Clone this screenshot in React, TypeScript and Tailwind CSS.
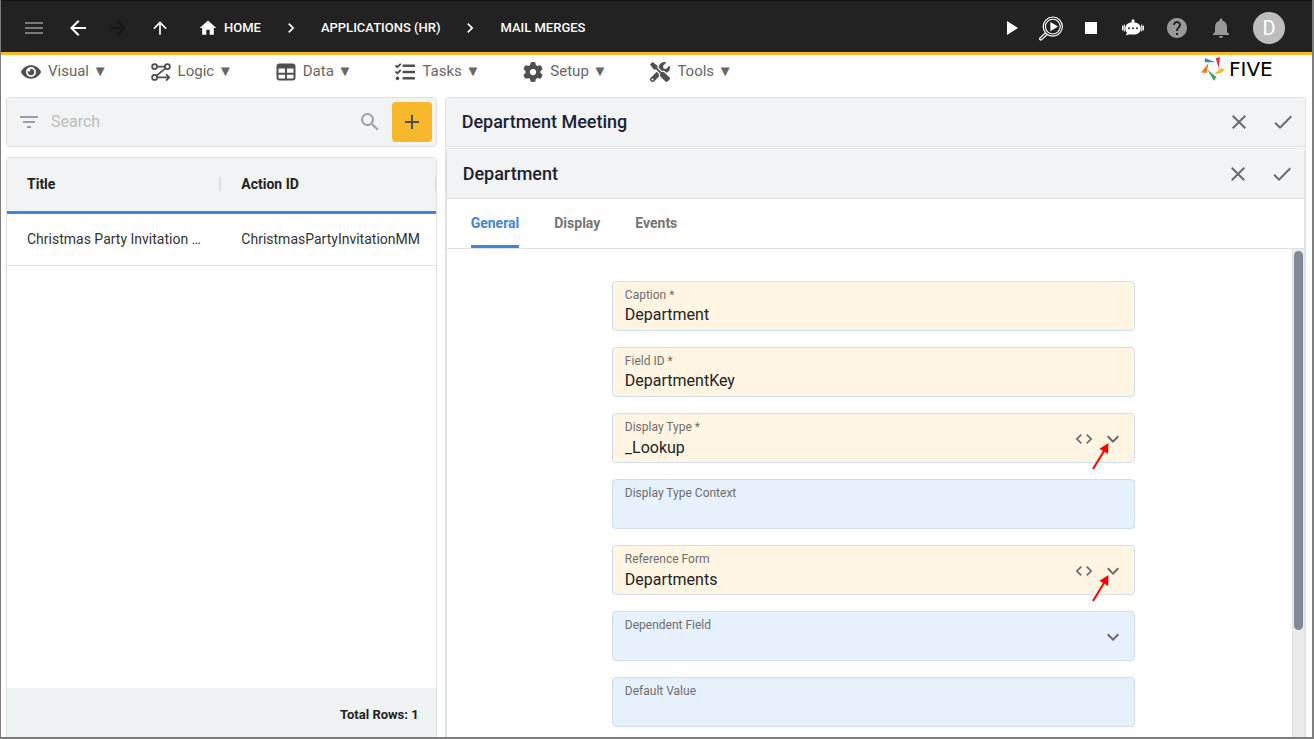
import { useState } from 'react'
import type { ReactNode } from 'react'
import {
  MdAdd,
  MdArrowBack,
  MdArrowForward,
  MdArrowUpward,
  MdCheck,
  MdChevronRight,
  MdClose,
  MdCode,
  MdExpandMore,
  MdFilterList,
  MdHelp,
  MdHome,
  MdMenu,
  MdNotifications,
  MdPlayArrow,
  MdSearch,
  MdStop,
} from 'react-icons/md'
import { FaEye, FaTasks, FaTools } from 'react-icons/fa'
import { FaGear } from 'react-icons/fa6'

interface FieldDef {
  id: string
  label: string
  value: string
  filled?: boolean
  kind?: 'select'
  code?: boolean
}

const FIELDS: FieldDef[] = [
  { id: 'caption', label: 'Caption *', value: 'Department', filled: true },
  { id: 'fieldId', label: 'Field ID *', value: 'DepartmentKey', filled: true },
  { id: 'displayType', label: 'Display Type *', value: '_Lookup', filled: true, kind: 'select', code: true },
  { id: 'displayContext', label: 'Display Type Context', value: '' },
  { id: 'referenceForm', label: 'Reference Form', value: 'Departments', filled: true, kind: 'select', code: true },
  { id: 'dependentField', label: 'Dependent Field', value: '', kind: 'select' },
  { id: 'defaultValue', label: 'Default Value', value: '' },
]

const MENUS: { label: string; icon: ReactNode }[] = [
  { label: 'Visual', icon: <FaEye size={20} /> },
  { label: 'Logic', icon: <LogicIcon /> },
  { label: 'Data', icon: <DataIcon /> },
  { label: 'Tasks', icon: <FaTasks size={20} /> },
  { label: 'Setup', icon: <FaGear size={20} /> },
  { label: 'Tools', icon: <FaTools size={20} /> },
]

const TABS = ['General', 'Display', 'Events']

function LogicIcon() {
  return (
    <svg width="20" height="20" viewBox="0 0 20 20" fill="none" stroke="currentColor" strokeWidth="1.8">
      <circle cx="3.6" cy="4.6" r="2.5" />
      <circle cx="16.4" cy="4.6" r="2.5" />
      <circle cx="3.6" cy="15.4" r="2.5" />
      <path d="M6.1 4.6h7.8M14.6 6.4l-9.1 7.2M6.1 15.4h11.7M15 12.2l3.2 3.2-3.2 3.2" />
    </svg>
  )
}

function DataIcon() {
  return (
    <svg width="20" height="20" viewBox="0 0 20 20" fill="none" stroke="currentColor" strokeWidth="2">
      <rect x="1.5" y="2.5" width="17" height="15" rx="2" />
      <path d="M2 4.5h16" strokeWidth="4" />
      <path d="M2 11.7h16M10 6v11" />
    </svg>
  )
}

function InspectIcon() {
  return (
    <svg width="26" height="26" viewBox="0 0 26 26" fill="none" stroke="currentColor">
      <circle cx="14.8" cy="11.6" r="9.6" strokeWidth="1.2" />
      <circle cx="14.8" cy="11.6" r="7.4" strokeWidth="1.1" />
      <path d="M7.6 17.6L2 23a1.1 1.1 0 0 0 1.6 1.6l5.8-5.2" strokeWidth="1.3" />
      <path d="M12.4 7v9.2l7.6-4.6z" fill="currentColor" stroke="none" />
    </svg>
  )
}

function BotIcon() {
  return (
    <svg width="22" height="18" viewBox="0 0 22 18" fill="currentColor">
      <circle cx="11" cy="1.8" r="1.5" />
      <path d="M10.3 2h1.4v2h-1.4z" />
      <path d="M11 3.2c4.8 0 7.8 2.6 7.8 6.2 0 3.7-3 6.2-7.8 6.2-1.2 0-2.2-.1-3.1-.4L4 16.6l.9-3c-1.1-1.1-1.7-2.5-1.7-4.2 0-3.6 3-6.2 7.8-6.2z" />
      <rect x="0" y="6.5" width="1.5" height="5" rx=".7" />
      <rect x="20.5" y="6.5" width="1.5" height="5" rx=".7" />
      <path d="M1.8 5.5h1v7h-1zM19.2 5.5h1v7h-1z" />
      <g fill="#222222">
        <circle cx="7" cy="9.2" r="1" />
        <circle cx="11" cy="9.2" r="1" />
        <circle cx="15" cy="9.2" r="1" />
      </g>
    </svg>
  )
}

function FiveMark() {
  return (
    <svg width="24" height="24" viewBox="0 0 24 24">
      <path d="M3.8 1l10.7 4.3H3.8z" fill="#3f83d8" />
      <path d="M14.7 1.3L19 0l-1.2 11.5z" fill="#e5323c" />
      <path d="M24 12.6l-4.5 3.6-7 1 8-6.2z" fill="#f9b82a" />
      <path d="M6.3 12.8l9.2 7.2-2.7 3.8z" fill="#3fa657" />
      <path d="M7.6 5.8L5.7 16 0 15.6z" fill="#f47b2a" />
    </svg>
  )
}

function TopBar() {
  return (
    <header className="flex h-[55px] shrink-0 items-center border-t border-b-3 border-t-[#111111] border-b-[#fbb829] bg-[#222222] pt-0.5 pr-[27px] pl-[9px] text-white">
      <button type="button" aria-label="Menu" className="flex w-12 justify-center text-[#7a7a7a]">
        <MdMenu size={24} />
      </button>
      <button type="button" aria-label="Back" className="flex w-10 justify-center">
        <MdArrowBack size={24} />
      </button>
      <button type="button" aria-label="Forward" disabled className="flex w-10 justify-center text-[#151515]">
        <MdArrowForward size={24} />
      </button>
      <button type="button" aria-label="Up" className="flex w-11 justify-center">
        <MdArrowUpward size={20} />
      </button>
      <nav aria-label="Breadcrumb" className="ml-4 flex items-center gap-5 text-[13px] font-medium">
        <a href="#home" className="flex items-center gap-1.5">
          <MdHome size={20} />
          HOME
        </a>
        <MdChevronRight size={20} />
        <a href="#applications">APPLICATIONS (HR)</a>
        <MdChevronRight size={20} />
        <a href="#mail-merges">MAIL MERGES</a>
      </nav>
      <div className="ml-auto flex items-center">
        <button type="button" aria-label="Run" className="flex w-10 justify-center">
          <MdPlayArrow size={24} />
        </button>
        <button type="button" aria-label="Inspect" className="flex w-10 justify-center">
          <InspectIcon />
        </button>
        <button type="button" aria-label="Stop" className="flex w-10 justify-center">
          <MdStop size={24} />
        </button>
        <button type="button" aria-label="Assistant" className="flex w-11 justify-center">
          <BotIcon />
        </button>
        <button type="button" aria-label="Help" className="flex w-11 justify-center text-[#999999]">
          <MdHelp size={24} />
        </button>
        <button type="button" aria-label="Notifications" className="flex w-11 justify-center text-[#999999]">
          <MdNotifications size={24} />
        </button>
        <button type="button" className="ml-2.5 size-8 rounded-full bg-[#bdbdbd] text-xl leading-8">
          D
        </button>
      </div>
    </header>
  )
}

function MenuBar() {
  return (
    <div className="flex h-8 shrink-0 items-center justify-between pr-[23px] pl-5">
      <nav className="flex items-center gap-[43px]">
        {MENUS.map((m) => (
          <button key={m.label} type="button" className="flex items-center gap-[7px] text-[15px] text-[#666666]">
            <span className="pt-px text-[#4f4f4f]">{m.icon}</span>
            <span>{m.label} ▼</span>
          </button>
        ))}
      </nav>
      <a href="#five" className="flex items-center gap-1 self-start pt-0.5">
        <FiveMark />
        <span className="w-[60px] font-['DejaVu_Sans',sans-serif] text-xl leading-6 text-black">FIVE</span>
      </a>
    </div>
  )
}

function RecordList() {
  return (
    <section className="flex min-h-0 flex-col gap-2.5">
      <div className="flex h-[50px] shrink-0 items-center rounded border border-[#dfe1e3] bg-[#f1f3f5] pr-1 pl-2.5">
        <button type="button" aria-label="Filter" className="text-[#98a1ab]">
          <MdFilterList size={24} />
        </button>
        <input
          type="search"
          aria-label="Search"
          placeholder="Search"
          className="ml-2.5 min-w-0 flex-1 bg-transparent text-base outline-none placeholder:text-[#bcbdbf]"
        />
        <button type="button" aria-label="Run search" className="mr-2.5 text-[#9aa1a8]">
          <MdSearch size={24} />
        </button>
        <button
          type="button"
          aria-label="Add"
          className="flex size-10 items-center justify-center rounded bg-[#f8b82b] text-[#4d4d4d]"
        >
          <MdAdd size={24} />
        </button>
      </div>

      <div className="flex min-h-0 flex-1 flex-col rounded-t border border-b-0 border-[#dfe1e3]">
        <table className="w-full table-fixed text-left text-sm text-[#333333]">
          <thead>
            <tr className="h-[54px] border-b-3 border-[#4285d8] bg-[#f1f3f5] text-[#222222]">
              <th className="p-0 font-bold">
                <div className="flex items-center justify-between pl-5">
                  Title
                  <span className="h-3.5 w-0.5 bg-[#dcdfe2]" />
                </div>
              </th>
              <th className="p-0 font-bold">
                <div className="flex items-center justify-between pl-5">
                  Action ID
                  <span className="h-3.5 w-px bg-[#dcdfe2]" />
                </div>
              </th>
            </tr>
          </thead>
          <tbody>
            <tr className="h-[53px] border-b border-[#e2e2e2]">
              <td className="pl-5">Christmas Party Invitation …</td>
              <td className="pl-5">ChristmasPartyInvitationMM</td>
            </tr>
          </tbody>
        </table>
        <div className="mt-auto flex h-[49px] items-center justify-end bg-[#eff3f4] pt-1 pr-[17px] text-[13px] font-bold text-[#222222]">
          Total Rows: 1
        </div>
      </div>
    </section>
  )
}

function PanelHeader({ title }: { title: string }) {
  return (
    <div className="flex h-[49px] shrink-0 items-center rounded-t border-b border-[#dfe1e3] bg-[#f1f3f5] pr-2.5 pl-4 text-[#6b6b6b]">
      <h2 className="mr-auto text-lg font-medium text-[#1b2233]">{title}</h2>
      <button type="button" aria-label={`Close ${title}`} className="mr-5">
        <MdClose size={24} />
      </button>
      <button type="button" aria-label={`Save ${title}`}>
        <MdCheck size={24} />
      </button>
    </div>
  )
}

function Pointer() {
  return (
    <svg
      className="pointer-events-none absolute top-7 right-6 z-10"
      width="18"
      height="28"
      viewBox="0 0 18 28"
    >
      <path d="M1 27 12 9" stroke="#ff0000" strokeWidth="2" />
      <path d="M16.5 1 16 12 7.5 6.8z" fill="#ff0000" />
    </svg>
  )
}

function Field({ field }: { field: FieldDef }) {
  const [value, setValue] = useState(field.value)

  return (
    <div
      className={`relative h-[50px] rounded border border-[#cdddec] px-3 pt-1 ${
        field.filled ? 'bg-[#fff5e2]' : 'bg-[#e7f1fc]'
      }`}
    >
      <label htmlFor={field.id} className="block text-xs leading-[18px] text-[#6e6e6e]">
        {field.label}
      </label>
      {field.kind === 'select' ? (
        <select
          id={field.id}
          value={value}
          onChange={(e) => setValue(e.target.value)}
          className="block h-6 w-full appearance-none bg-transparent text-base text-[#222222] outline-none"
        >
          <option value={field.value}>{field.value}</option>
        </select>
      ) : (
        <input
          id={field.id}
          value={value}
          onChange={(e) => setValue(e.target.value)}
          className="block h-[22px] w-full bg-transparent text-base text-[#222222] outline-none"
        />
      )}
      {field.kind === 'select' && (
        <div className="pointer-events-none absolute inset-y-0 right-[9px] flex items-center gap-[7px] pt-px text-[#6b6b6b]">
          {field.code && <MdCode size={20} />}
          <MdExpandMore size={24} />
        </div>
      )}
      {field.code && <Pointer />}
    </div>
  )
}

function DetailPanel() {
  const [tab, setTab] = useState('General')

  return (
    <section className="flex min-h-0 flex-col rounded-t border border-b-0 border-[#dfe1e3]">
      <PanelHeader title="Department Meeting" />
      <div className="mt-px flex min-h-0 flex-1 flex-col rounded-t border border-b-0 border-[#dfe1e3] pt-px">
        <PanelHeader title="Department" />
        <div role="tablist" className="flex h-[50px] shrink-0 gap-[35px] border-b border-[#dfe1e3] px-6">
          {TABS.map((t) => (
            <button
              key={t}
              type="button"
              role="tab"
              aria-selected={t === tab}
              onClick={() => setTab(t)}
              className={`border-b-3 pt-0.5 text-sm font-bold ${
                t === tab ? 'border-[#4285d8] text-[#4285d8]' : 'border-transparent text-[#757575]'
              }`}
            >
              {t}
            </button>
          ))}
        </div>
        <div className="flex min-h-0 flex-1">
          <form className="min-w-0 flex-1 overflow-hidden pt-8 pl-2">
            <div className="mx-auto flex max-w-[523px] flex-col gap-4">
              {FIELDS.map((f) => (
                <Field key={f.id} field={f} />
              ))}
            </div>
          </form>
          {/* scroll track */}
          <div className="w-3 border-l border-[#dedede] bg-[#ebebeb] pt-0.5">
            <div className="mx-px h-[78%] rounded-full bg-[#828a9a]" />
          </div>
        </div>
      </div>
    </section>
  )
}

export default function App() {
  return (
    <div className="flex h-screen flex-col overflow-hidden border-r-2 border-b-2 border-l border-[#7d7d7d] bg-white font-[Roboto,'Liberation_Sans',sans-serif]">
      <TopBar />
      <MenuBar />
      <main className="mt-2.5 grid min-h-0 flex-1 grid-cols-[minmax(0,1fr)_minmax(0,2fr)] grid-rows-[minmax(0,1fr)] gap-2 pr-1.5 pl-[5px]">
        <RecordList />
        <DetailPanel />
      </main>
    </div>
  )
}
